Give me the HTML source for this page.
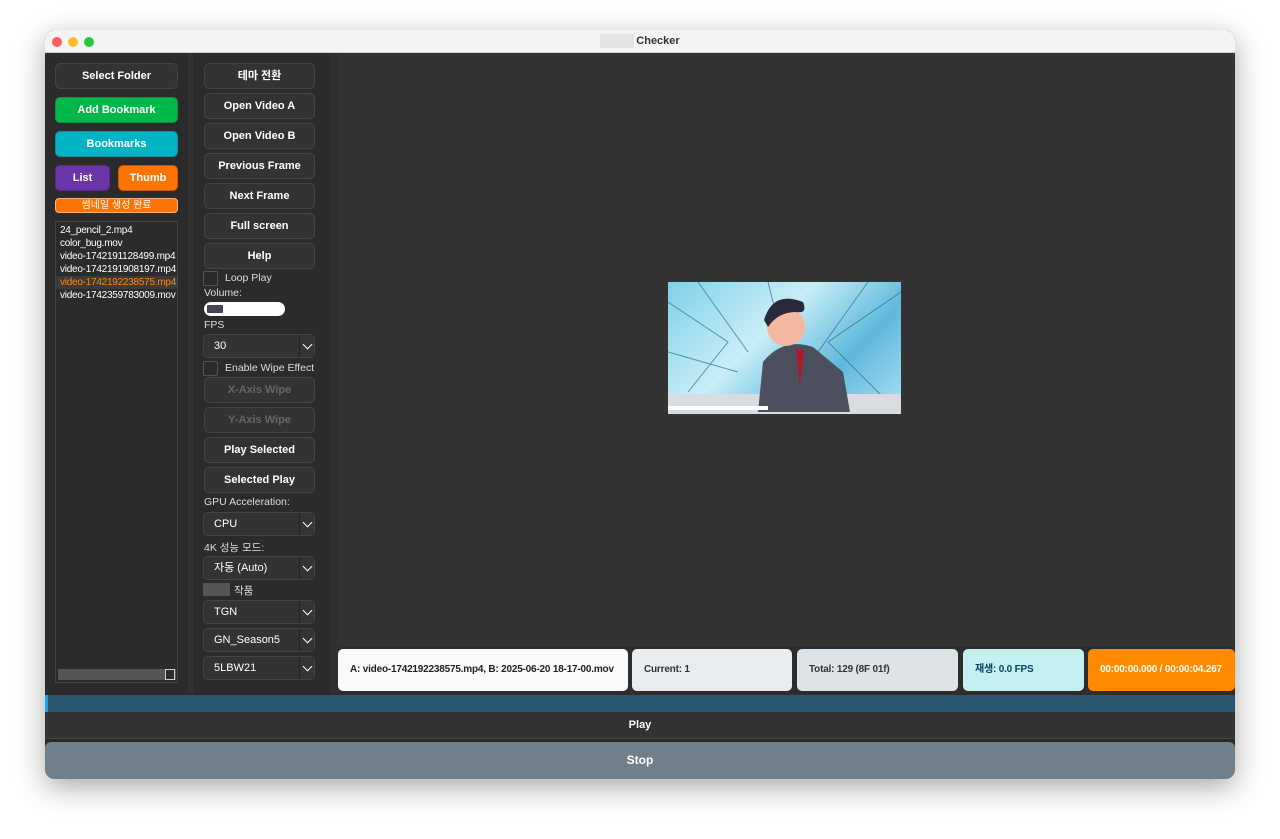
<!DOCTYPE html>
<html><head><meta charset="utf-8"><style>
*{box-sizing:border-box;margin:0;padding:0}
body{width:1280px;height:839px;background:#fff;position:relative;overflow:hidden;font-family:"Liberation Sans","Noto Sans CJK KR",sans-serif;}
.win{position:absolute;left:45px;top:30px;width:1190px;height:749px;border-radius:10px;overflow:hidden;background:#2a2a2a;box-shadow:0 8px 30px rgba(0,0,0,.35)}
.title{position:absolute;left:0;top:0;width:100%;height:23px;background:#f4f4f4;border-bottom:1px solid #d0d0d0;font-size:11px;font-weight:bold;color:#333;text-align:center;line-height:23px}
.dot{position:absolute;top:7px;width:10px;height:10px;border-radius:50%}
.a{position:absolute}
.btn{position:absolute;border-radius:5px;background:#333;border:1px solid #444;color:#fff;font-size:11px;font-weight:bold;text-align:center}
.lbl{position:absolute;color:#ddd;font-size:10.5px}
.sel{position:absolute;left:158px;width:112px;height:24px;background:#333;border:1px solid #444;border-radius:5px;color:#fff;font-size:11px;line-height:22px;padding-left:10px}
.sel:after{content:"";position:absolute;right:0;top:0;width:14px;height:22px;border-left:1px solid #222;background:#353535}
.sel i{position:absolute;right:3px;top:6px;width:7px;height:7px;border-right:1.5px solid #fff;border-bottom:1.5px solid #fff;transform:rotate(45deg);z-index:2}
.chk{position:absolute;width:15px;height:15px;border:1px solid #555;border-radius:2px;background:#2a2a2a}
.st{position:absolute;top:619px;height:42px;border-radius:5px;font-size:10px;font-weight:bold;line-height:42px;padding-left:12px;letter-spacing:-0.2px}
</style></head><body>
<div class="win">
<div class="title"><span style="display:inline-block;width:34px;height:14px;background:#e4e4e4;vertical-align:middle;margin-right:2px"></span>Checker</div>
<div class="dot" style="left:7px;background:#fe5f57"></div>
<div class="dot" style="left:23px;background:#febc2e"></div>
<div class="dot" style="left:39px;background:#28c840"></div>
<div class="a" style="left:0;top:23px;width:143px;height:640px;background:#2b2b2b"></div>
<div class="a" style="left:143px;top:23px;width:5px;height:640px;background:#323232"></div>
<div class="a" style="left:148px;top:23px;width:137px;height:640px;background:#2b2b2b"></div>
<div class="a" style="left:285px;top:23px;width:8px;height:640px;background:#303030"></div>
<div class="btn" style="left:10px;top:33px;width:123px;height:26px;line-height:24px">Select Folder</div>
<div class="btn" style="left:10px;top:67px;width:123px;height:26px;line-height:24px;background:#00b84a;border-color:#1c8d3f">Add Bookmark</div>
<div class="btn" style="left:10px;top:101px;width:123px;height:26px;line-height:24px;background:#00b4c6;border-color:#1a8c98">Bookmarks</div>
<div class="btn" style="left:10px;top:135px;width:55px;height:26px;line-height:24px;background:#6a35a8;border-color:#55308a">List</div>
<div class="btn" style="left:73px;top:135px;width:60px;height:26px;line-height:24px;background:#ff7300;border-color:#c25a10">Thumb</div>
<div class="btn" style="left:10px;top:168px;width:123px;height:15px;line-height:13px;background:#ff7300;border-color:#ffb27a;font-weight:normal;font-size:10px;border-radius:4px">썸네일 생성 완료</div>
<div class="a" style="left:10px;top:191px;width:123px;height:462px;border:1px solid #444;background:#2b2b2b;font-size:10px;letter-spacing:-0.25px;color:#fff;line-height:13px;padding:2px 0 0 4px;overflow:hidden;white-space:nowrap">
24_pencil_2.mp4<br>color_bug.mov<br>video-1742191128499.mp4<br>video-1742191908197.mp4<br><span style="color:#ff8a00;background:#3a3a3a;display:inline-block;width:130px;margin-left:-4px;padding-left:4px">video-1742192238575.mp4</span><br>video-1742359783009.mov
<div class="a" style="left:2px;bottom:2px;width:118px;height:11px;background:#555"></div>
<div class="a" style="right:2px;bottom:2px;width:10px;height:11px;border:1px solid #ccc;background:#2b2b2b"></div>
</div>
<div class="btn" style="left:159px;top:33px;width:111px;height:26px;line-height:24px">테마 전환</div>
<div class="btn" style="left:159px;top:63px;width:111px;height:26px;line-height:24px">Open Video A</div>
<div class="btn" style="left:159px;top:93px;width:111px;height:26px;line-height:24px">Open Video B</div>
<div class="btn" style="left:159px;top:123px;width:111px;height:26px;line-height:24px">Previous Frame</div>
<div class="btn" style="left:159px;top:153px;width:111px;height:26px;line-height:24px">Next Frame</div>
<div class="btn" style="left:159px;top:183px;width:111px;height:26px;line-height:24px">Full screen</div>
<div class="btn" style="left:159px;top:213px;width:111px;height:26px;line-height:24px">Help</div>
<div class="chk" style="left:158px;top:241px"></div><div class="lbl" style="left:180px;top:242px">Loop Play</div>
<div class="lbl" style="left:159px;top:257px">Volume:</div>
<div class="a" style="left:159px;top:272px;width:81px;height:14px;border-radius:7px;background:#fff"><div class="a" style="left:3px;top:3px;width:16px;height:8px;background:#445;border-radius:1px"></div></div>
<div class="lbl" style="left:159px;top:289px">FPS</div>
<div class="sel" style="top:304px">30<i></i></div>
<div class="chk" style="left:158px;top:331px"></div><div class="lbl" style="left:180px;top:332px">Enable Wipe Effect</div>
<div class="btn" style="left:159px;top:347px;width:111px;height:26px;line-height:24px;color:#666">X-Axis Wipe</div>
<div class="btn" style="left:159px;top:377px;width:111px;height:26px;line-height:24px;color:#666">Y-Axis Wipe</div>
<div class="btn" style="left:159px;top:407px;width:111px;height:26px;line-height:24px">Play Selected</div>
<div class="btn" style="left:159px;top:437px;width:111px;height:26px;line-height:24px">Selected Play</div>
<div class="lbl" style="left:159px;top:466px">GPU Acceleration:</div>
<div class="sel" style="top:482px">CPU<i></i></div>
<div class="lbl" style="left:159px;top:510px">4K 성능 모드:</div>
<div class="sel" style="top:526px">자동 (Auto)<i></i></div>
<div class="a" style="left:158px;top:553px;width:27px;height:13px;background:#555"></div><div class="lbl" style="left:189px;top:553px">작품</div>
<div class="sel" style="top:570px">TGN<i></i></div>
<div class="sel" style="top:598px">GN_Season5<i></i></div>
<div class="sel" style="top:626px">5LBW21<i></i></div>
<div class="a" style="left:293px;top:23px;width:897px;height:594px;background:#333"></div>
<div class="a" style="left:623px;top:252px;width:233px;height:132px;overflow:hidden;background:linear-gradient(135deg,#7fd0ea,#c8eef7 40%,#5fb8dc 70%,#a9e2f2)">
<svg width="233" height="132" viewBox="0 0 233 132"><g stroke="#2a6f8a" stroke-width="1" fill="none" opacity=".7"><path d="M0 20L60 60L20 110M30 0L80 70M233 10L160 60L220 120M200 0L150 70M100 0L110 40M0 70L70 90"/></g>
<rect x="0" y="112" width="233" height="20" fill="#d8dce0"/>
<path d="M90 130 L95 80 Q115 55 145 65 L175 90 L182 130 Z" fill="#4c4f5e"/>
<circle cx="118" cy="45" r="19" fill="#f4b7a0"/>
<path d="M96 38 Q105 8 135 20 Q140 32 128 30 Q110 30 100 45Z" fill="#2a2a3a"/>
<path d="M128 68 L132 105 L136 68Z" fill="#b0182c"/>
<rect x="0" y="124" width="100" height="4" fill="#fff"/></svg></div>
<div class="a" style="left:293px;top:617px;width:897px;height:48px;background:#2d2d2d"></div>
<div class="st" style="left:293px;width:290px;background:#f8f9fb;color:#222">A: video-1742192238575.mp4, B: 2025-06-20 18-17-00.mov</div>
<div class="st" style="left:587px;width:160px;background:#e8ecef;color:#333">Current: 1</div>
<div class="st" style="left:752px;width:161px;background:#dde3e7;color:#333">Total: 129 (8F 01f)</div>
<div class="st" style="left:918px;width:121px;background:#c4f0f2;color:#046">재생: 0.0 FPS</div>
<div class="st" style="left:1043px;width:147px;background:#ff8a00;color:#fff">00:00:00.000 / 00:00:04.267</div>
<div class="a" style="left:0;top:665px;width:1190px;height:17px;background:#2b5670"><div style="width:3px;height:100%;background:#1ba3e8"></div></div>
<div class="a" style="left:0;top:682px;width:1190px;height:27px;background:#333;color:#fff;font-size:11px;font-weight:bold;text-align:center;line-height:27px;border-bottom:1px solid #444">Play</div>
<div class="a" style="left:0;top:712px;width:1190px;height:37px;background:#6f808a;color:#fff;font-size:12px;font-weight:bold;text-align:center;line-height:37px;border-radius:6px">Stop</div>
</div>
</body></html>
